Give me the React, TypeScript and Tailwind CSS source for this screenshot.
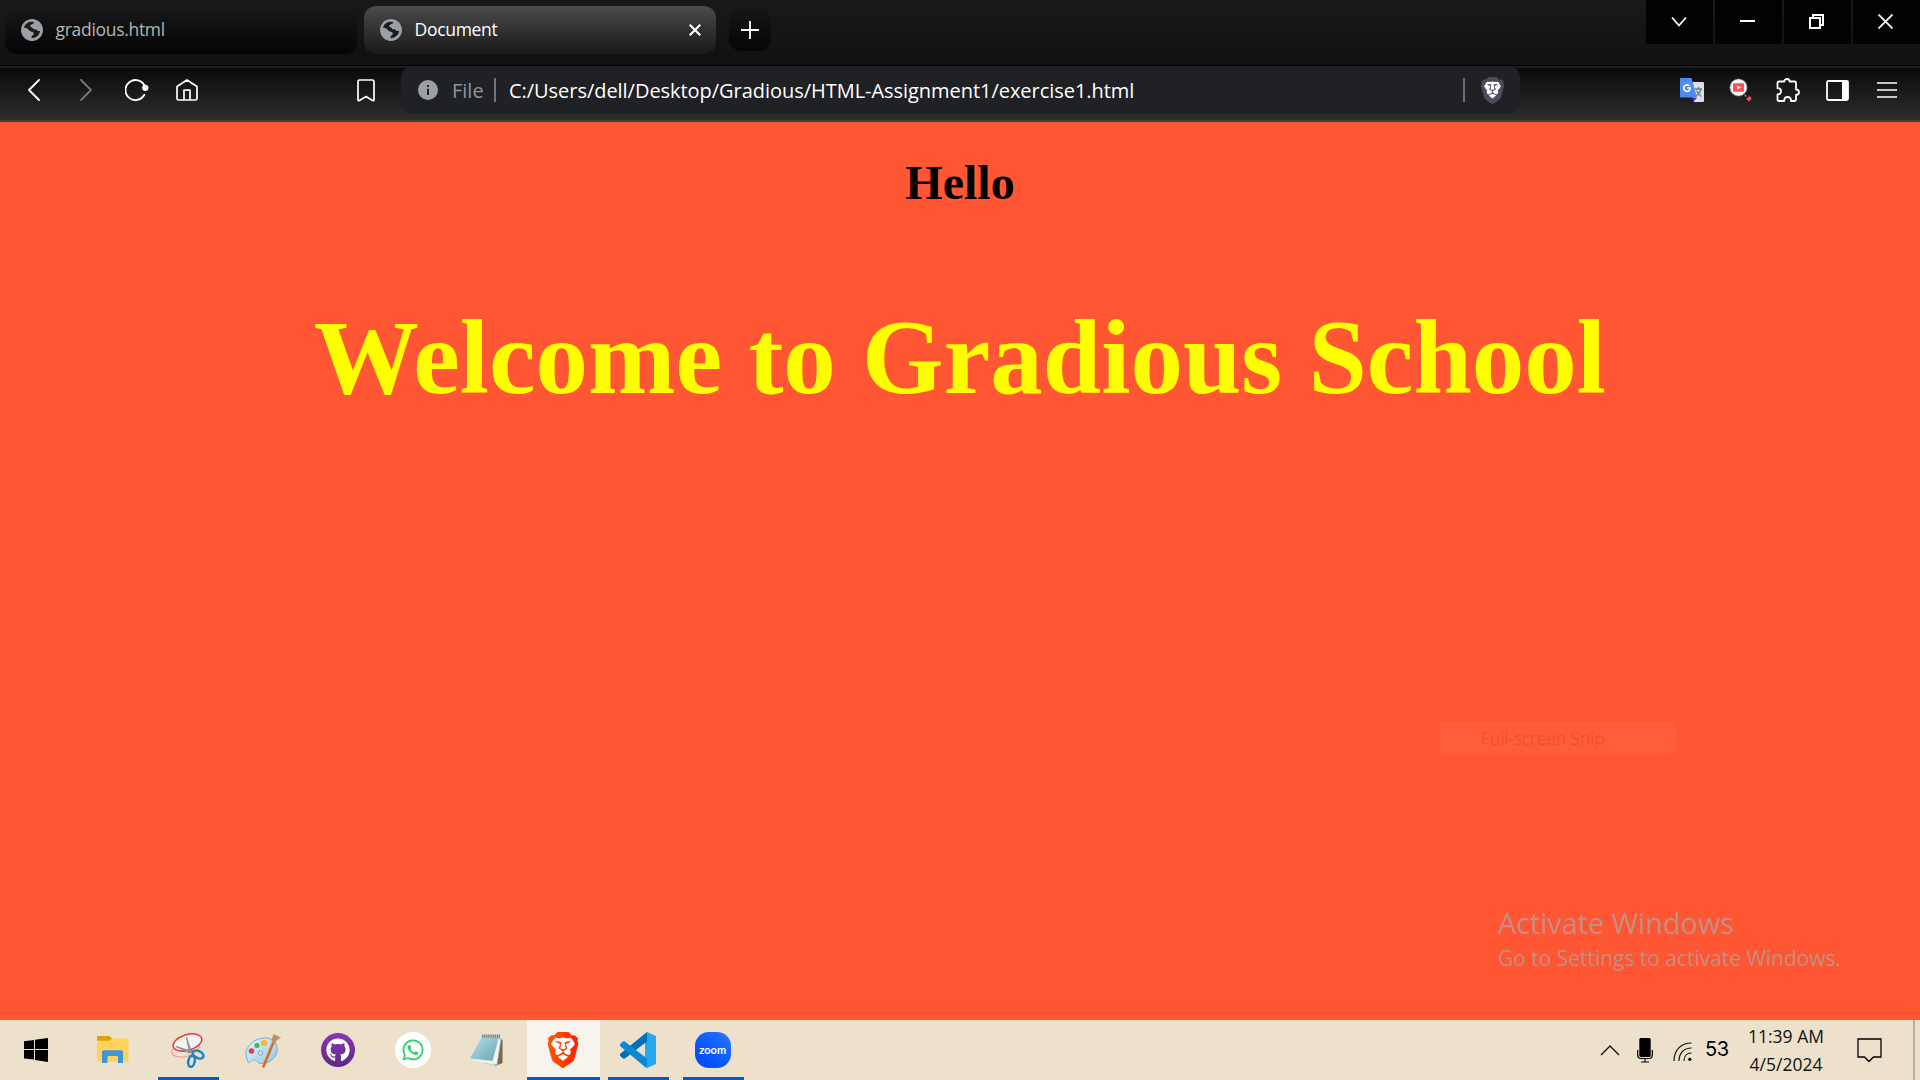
import { SiBrave } from "react-icons/si";
import { FaGithub, FaWhatsapp } from "react-icons/fa";
import type { ReactNode } from "react";

const ui = "font-['Open_Sans','Noto_Sans',sans-serif]";

function Globe() {
  return (
    <svg width="22" height="22" viewBox="0 0 22 22" className="shrink-0">
      <circle cx="11" cy="11" r="10.8" fill="#9aa0a6" />
      <path d="M3 8.4 C4 5 7 2.8 10.4 2.6 L13.5 3.2 C13 4.5 11.5 5 10.4 5.4 C9 6 8.8 8 10.5 8.3 C12 8.6 11.5 10.5 13.4 10.3 L15.5 10.5 C15.8 12 17.3 12.2 19.2 12 C18.6 15.5 15.6 18.6 11.8 19.2 L10.5 19 L10.8 16.8 C12.5 16 13.4 14.6 12.4 13.4 C11 12 8.8 13 8.1 11.3 C7.6 9.8 5.6 9 3 8.4 Z" fill="#1a1b1d" />
      <circle cx="11" cy="11" r="9.7" fill="none" stroke="#9aa0a6" strokeWidth="2" />
    </svg>
  );
}

function Lion({ size, fill }: { size: number; fill: string }) {
  return (
    <svg width={size} height={size} viewBox="0 0 24 24">
      <defs>
        <linearGradient id="brave" x1="0" y1="0" x2="1" y2="0">
          <stop offset="0" stopColor="#ff5601" />
          <stop offset="0.5" stopColor="#ff4000" />
          <stop offset="1" stopColor="#ff1f01" />
        </linearGradient>
      </defs>
      <path d="M7 4 L17 4 L19.5 8 L16.5 17 L12 20.5 L7.5 17 L4.5 8 Z" fill="#fff" />
      <SiBrave size={24} fill={fill} />
    </svg>
  );
}

function BackForward({ flip, color }: { flip?: boolean; color: string }) {
  return (
    <svg width="12" height="22" viewBox="0 0 12 22" fill="none" stroke={color} strokeWidth="1.8" strokeLinecap="round" strokeLinejoin="round">
      <path d={flip ? "M1 1 L11 11 L1 21" : "M11 1 L1 11 L11 21"} />
    </svg>
  );
}

function Tab({ title, active }: { title: string; active?: boolean }) {
  return (
    <div
      className={
        active
          ? "flex h-12 w-[352px] items-center rounded-xl bg-linear-to-b from-[#4b4b4b] to-[#1a1a1a] pr-[15px] pl-4 text-white"
          : "flex h-12 w-[352px] items-center rounded-xl bg-linear-to-b from-[#191919] to-[#050505] pr-4 pl-4 text-[#b4b4b4]"
      }
    >
      <Globe />
      <span className="-mt-0.5 ml-[12.5px] text-[17.5px] tracking-[-0.3px]">{title}</span>
      {active && (
        <svg className="ml-auto" width="12" height="12" viewBox="0 0 12 12" stroke="#fff" strokeWidth="2.1">
          <path d="M0.7 0.7 L11.3 11.3 M11.3 0.7 L0.7 11.3" />
        </svg>
      )}
    </div>
  );
}

function WindowButton({ children }: { children: ReactNode }) {
  return <div className="flex h-11 w-[67px] items-center justify-center bg-[#020202] pr-0.5 pb-px">{children}</div>;
}

function TabStrip() {
  return (
    <div className="flex h-[65px] bg-linear-to-b from-[#191919] to-[#101010]">
      <div className="flex gap-[7px] pt-1.5 pl-[5px]">
        <Tab title="gradious.html" />
        <Tab title="Document" active />
        <div className="mt-[3px] ml-[6px] flex h-[42px] w-[42px] items-center justify-center rounded-xl bg-linear-to-b from-[#151515] to-[#060606]">
          <svg width="18" height="18" viewBox="0 0 18 18" stroke="#fff" strokeWidth="1.8">
            <path d="M9 0 V18 M0 9 H18" />
          </svg>
        </div>
      </div>
      <div className="ml-auto flex gap-0.5">
        <WindowButton>
          <svg width="16" height="12" viewBox="0 0 16 12" fill="none" stroke="#fff" strokeWidth="1.8">
            <path d="M1 1.5 L8 9.5 L15 1.5" />
          </svg>
        </WindowButton>
        <WindowButton>
          <div className="mb-px h-0.5 w-[15px] bg-white" />
        </WindowButton>
        <WindowButton>
          <svg width="15" height="15" viewBox="0 0 15 15" fill="none" stroke="#fff" strokeWidth="2">
            <path d="M1 4 H11 V14 H1 Z M4 4 V1 H14 V11 H11" />
          </svg>
        </WindowButton>
        <WindowButton>
          <svg width="15" height="15" viewBox="0 0 15 15" stroke="#fff" strokeWidth="1.7">
            <path d="M0.5 0.5 L14.5 14.5 M14.5 0.5 L0.5 14.5" />
          </svg>
        </WindowButton>
      </div>
    </div>
  );
}

function Toolbar() {
  return (
    <div className="flex h-[57px] items-start border-b-2 border-[#3e3e3e] bg-[linear-gradient(to_bottom,#000_0px,#000_1px,#1c1c1c_1px,#1c1c1c_3px,#0a0a0a_3px,#2d2d2d_100%)]">
      <div className="flex h-[50px] w-[401px] items-center">
        <div className="ml-7">
          <BackForward color="#fff" />
        </div>
        <div className="ml-[40px]">
          <BackForward flip color="#777" />
        </div>
        <svg className="ml-[33px]" width="24" height="22" viewBox="0 0 24 22" fill="none" stroke="#fff" strokeWidth="1.9" strokeLinecap="round">
          <path d="M19.7 7.2 A10 10 0 1 0 19.3 15.8" />
          <circle cx="20.3" cy="8.8" r="2.2" fill="#fff" />
        </svg>
        <svg className="ml-[27px]" width="22" height="22" viewBox="0 0 22 22" fill="none" stroke="#fff" strokeWidth="1.7" strokeLinejoin="round">
          <path d="M1 7.5 L11 1 L21 7.5 V19.5 Q21 21 19.5 21 H2.5 Q1 21 1 19.5 Z M8 21 V11.2 H14 V21" />
        </svg>
        <svg className="ml-[159px]" width="18" height="23" viewBox="0 0 18 23" fill="none" stroke="#fff" strokeWidth="1.7" strokeLinejoin="round">
          <path d="M1 2.8 Q1 1 2.8 1 H15.2 Q17 1 17 2.8 V20.5 Q17 22.4 15.5 21.4 L9 17.5 L2.5 21.4 Q1 22.4 1 20.5 Z" />
        </svg>
      </div>
      <div className="mt-px flex h-12 w-[1119px] items-center rounded-xl bg-[#202124] text-[20px]">
        <svg className="ml-[17px]" width="20" height="20" viewBox="0 0 20 20">
          <circle cx="10" cy="10" r="10" fill="#9aa0a6" />
          <path d="M9 8.8 H11 V15 H9 Z M9 5 H11 V7 H9 Z" fill="#202124" />
        </svg>
        <span className="mt-px ml-[14px] w-[42px] text-[#8f959b]">File</span>
        <div className="h-6 w-0.5 bg-[#70757a]" />
        <span className="mt-px ml-[13px] whitespace-nowrap tracking-[-0.04px] text-white">C:/Users/dell/Desktop/Gradious/HTML-Assignment1/exercise1.html</span>
        <div className="mr-[14px] ml-auto h-6 w-0.5 bg-[#6b6d72]" />
        <div className="mr-[14px]">
          <Lion size={27} fill="#4d4c5d" />
        </div>
      </div>
      <div className="ml-auto flex h-[50px] items-center pr-[23px]">
        <svg width="24" height="24" viewBox="0 0 24 24">
          <path d="M10 4 H23 Q24 4 24 5 V23 Q24 24 23 24 H14 Z" fill="#dedede" />
          <path d="M15 11 H22 M18.5 9 V11 M21 11 C20 15 17.5 17 15.5 18 M16.5 12.5 C17.5 15 19.5 17.5 21.5 18.5" stroke="#5f7f88" strokeWidth="1.3" fill="none" />
          <path d="M12 19.5 H17 L13.5 24 Z" fill="#3740b8" />
          <path d="M1 0 H11.5 L17 19.5 H1 Q0 19.5 0 18.5 V1 Q0 0 1 0 Z" fill="#4b8bf5" />
          <path d="M9.4 8 A3.2 3.2 0 1 0 10.2 10 H7.4" stroke="#fff" strokeWidth="1.7" fill="none" />
        </svg>
        <svg className="ml-[25px]" width="24" height="24" viewBox="0 0 24 24">
          <circle cx="9.5" cy="9.5" r="8.8" fill="#f4f4f2" stroke="#23495a" strokeWidth="0.8" />
          <rect x="4" y="5.2" width="11" height="8.6" rx="0.7" fill="#fc5055" />
          <path d="M8 7.5 L12 9.5 L8 11.5 Z" fill="#fff" />
          <path d="M15.2 17.4 L16.4 16.4 L17.8 18 L16.6 19 Z M17.2 21 L20.4 18 L22.8 20.4 L19.8 23.5 Z" fill="#fa5055" />
        </svg>
        <svg className="ml-[23px]" width="24" height="24" viewBox="0 0 24 24" fill="none" stroke="#fff" strokeWidth="1.8" strokeLinejoin="round">
          <path d="M3 3.5 H8.3 C8.3 2 9.5 1 11 1 C12.6 1 13.7 2 13.7 3.5 H18.5 Q20 3.5 20 5 V11.5 C22 11.4 23 12.7 23 14.2 C23 15.8 22 16.8 20 16.8 V21.5 Q20 23 18.5 23 H15 C15 20 13.5 19 11.6 19 C9.7 19 8.2 20 8.2 23 H3 Q1.5 23 1.5 21.5 V16.4 C4 16.4 5 15 5 13.3 C5 11.5 4 10.2 1.5 10.2 V5 Q1.5 3.5 3 3.5 Z" />
        </svg>
        <svg className="ml-[26px]" width="23" height="21" viewBox="0 0 23 21">
          <rect x="1" y="1" width="21" height="19" rx="1.5" fill="none" stroke="#fff" strokeWidth="1.8" />
          <path d="M16 1 H22 V20 H16 Z" fill="#fff" />
        </svg>
        <svg className="ml-7" width="20" height="16" viewBox="0 0 20 16" stroke="#fff" strokeWidth="1.7">
          <path d="M0 1 H20 M0 8 H20 M0 15 H20" />
        </svg>
      </div>
    </div>
  );
}

function AppSlot({ children, state }: { children: ReactNode; state?: "open" | "active" }) {
  return (
    <div className={state === "active" ? "flex h-[60px] w-[73px] flex-col bg-[#f8f3ec]" : "mx-[6px] flex h-[60px] w-[61px] flex-col"}>
      <div className="flex h-[57px] items-center justify-center pt-[3px] pr-[1.5px]">{children}</div>
      {state && <div className="h-[3px] bg-[#005bd0]" />}
    </div>
  );
}

function Taskbar() {
  return (
    <div className="flex h-[60px] bg-[#ede1cc]">
      <div className="flex">
        <div className="flex w-[72px] items-center justify-center">
          <svg width="24" height="24" viewBox="0 0 24 24">
            <path d="M0 3.2 L10 1.9 V11 H0 Z M11 1.7 L24 0 V11 H11 Z M0 12 H10 V21.6 L0 20.6 Z M11 12 H24 V24 L11 22 Z" />
          </svg>
        </div>
        <div className="ml-[5px] flex gap-0.5">
          <AppSlot>
            <svg width="33" height="28" viewBox="0 0 33 28">
              <path d="M1 1 Q1 0 2 0 H13 L15.5 2.5 H31 Q32.5 2.5 32.5 4 V24.5 Q32.5 26 31 26 H2.5 Q1 26 1 24.5 Z" fill="#ffd35b" />
              <path d="M1 1 Q1 0 2 0 H13.5 L16 2.2 L14 4.7 H1 Z" fill="#e2a108" />
              <path d="M6 27 V16 Q6 14.3 7.7 14.3 H25.3 Q27 14.3 27 16 V27 H22 V21 Q22 20 21 20 H12.5 Q11.5 20 11.5 21 V27 Z" fill="#3996dd" />
            </svg>
          </AppSlot>
          <AppSlot state="open">
            <svg width="34" height="35" viewBox="0 0 34 35" fill="none">
              <ellipse cx="14.5" cy="16.5" rx="14" ry="7" transform="rotate(-14 14.5 16.5)" stroke="#e8a398" strokeWidth="1.2" fill="#f1dfd2" />
              <ellipse cx="16.5" cy="9.5" rx="14.8" ry="7.8" transform="rotate(-17 16.5 9.5)" stroke="#e33a3a" strokeWidth="1.5" fill="#f3f3f1" />
              <path d="M15.5 4.5 L18.5 20 L20.3 18.2 Z M5 13.5 L18 20 L21 18.3 Z" fill="#a8abac" stroke="#7d8183" strokeWidth="0.8" />
              <ellipse cx="27" cy="21.5" rx="5.8" ry="3.5" transform="rotate(25 27 21.5)" stroke="#1684c9" strokeWidth="2.5" />
              <ellipse cx="20.5" cy="28.3" rx="3.2" ry="5.6" transform="rotate(12 20.5 28.3)" stroke="#1684c9" strokeWidth="2.5" />
            </svg>
          </AppSlot>
          <AppSlot>
            <svg width="36" height="35" viewBox="0 0 36 35">
              <defs>
                <linearGradient id="pal" x1="0" y1="0" x2="1" y2="1">
                  <stop offset="0" stopColor="#e8f6fc" />
                  <stop offset="1" stopColor="#91c8e5" />
                </linearGradient>
              </defs>
              <path d="M1 22 C0 14 9 5 20 5 C29 5 33 11 32 18 C31 26 23 31 16 30.5 C11 30 12 26 8.5 27 C5 28 4.5 31.5 3 29 C2 27 1.3 24.5 1 22 Z" fill="url(#pal)" stroke="#74aecd" strokeWidth="1" />
              <circle cx="6.5" cy="18" r="2.8" fill="#e24538" />
              <rect x="9.5" y="10" width="5" height="5" rx="1.7" fill="#55b54a" />
              <rect x="16" y="7" width="6" height="6" rx="2" fill="#fbb72c" />
              <circle cx="15.5" cy="20" r="2.2" fill="#ecdfca" stroke="#74aecd" />
              <path d="M18.5 33.5 L28.5 9" stroke="#d6701f" strokeWidth="2.6" strokeLinecap="round" />
              <path d="M26.5 7 L28.5 1 L36 4.5 L31 8 L29.3 12 Z" fill="#bd9468" />
            </svg>
          </AppSlot>
          <AppSlot>
            <div className="flex h-[34px] w-[34px] items-center justify-center rounded-full bg-linear-to-b from-[#8a37b2] to-[#5b2a86] text-white">
              <FaGithub size={24} />
            </div>
          </AppSlot>
          <AppSlot>
            <div className="flex h-9 w-9 items-center justify-center rounded-full bg-white text-[#25d366]">
              <FaWhatsapp size={24} />
            </div>
          </AppSlot>
          <AppSlot>
            <svg className="-ml-1" width="34" height="33" viewBox="0 0 34 33">
              <defs>
                <linearGradient id="note" x1="0" y1="0" x2="1" y2="1">
                  <stop offset="0" stopColor="#b9dfe4" />
                  <stop offset="1" stopColor="#66a6b5" />
                </linearGradient>
              </defs>
              <path d="M30 4 L33.5 6 V29 L26 32 Z" fill="#7d6545" />
              <path d="M29 4 L32 5 L28 31 L15 29 Z" fill="#edf3f5" stroke="#9eafb3" strokeWidth="0.7" />
              <path d="M13 3 H30 L23.5 27 L1 24.5 Z" fill="url(#note)" />
              <path d="M1 24.5 L23.5 27 L27 30.5 L11 28.5 Z" fill="#e9f0f1" />
              <path d="M13 2 H31" stroke="#65777c" strokeWidth="3" strokeDasharray="1.3 0.8" />
            </svg>
          </AppSlot>
        </div>
        <div className="ml-0.5 flex gap-0.5">
          <AppSlot state="active">
            <Lion size={36} fill="url(#brave)" />
          </AppSlot>
          <AppSlot state="open">
            <svg width="36" height="36" viewBox="0 0 36 36">
              <path d="M27 0 L36 4 V32 L27 36 L25 31 V5 Z" fill="#24a7ee" />
              <path d="M27 0 V9.5 L4.5 26.8 L2.8 26.5 L0 23.8 V22 Z" fill="#0070b8" />
              <path d="M27 36 V26.5 L4.5 9.2 L2.8 9.5 L0 12.2 V14 L25 35 Z" fill="#0a8ad4" />
            </svg>
          </AppSlot>
          <AppSlot state="open">
            <div className="flex h-9 w-9 items-center justify-center rounded-[14px] bg-linear-to-bl from-[#2b75ff] via-[#0b5cff] to-[#0647e8] font-['Lato',sans-serif] text-[11px] leading-none font-bold text-white">
              <span className="-mt-0.5">zoom</span>
            </div>
          </AppSlot>
        </div>
      </div>
      <div className="ml-auto flex items-center">
        <svg width="20" height="11" viewBox="0 0 20 11" fill="none" stroke="#111" strokeWidth="1.4">
          <path d="M1 10 L10 1 L19 10" />
        </svg>
        <svg className="ml-[17px]" width="16" height="25" viewBox="0 0 16 25">
          <rect x="2.3" y="0" width="11.4" height="19" rx="1.5" />
          <path d="M0.7 12 V17 Q0.7 20.5 4 20.5 H12 Q15.3 20.5 15.3 17 V12 M8 20.5 V24 M4 24 H12" fill="none" stroke="#000" strokeWidth="1.2" />
        </svg>
        <svg className="mt-[3px] ml-5" width="20" height="20" viewBox="0 0 20 20" fill="none" stroke="#111" strokeWidth="1.2">
          <path d="M1 19 C1 8 8 1 18.5 1 M6 19 C6 11 11 6 18.5 6 M11 19 C11 14 14 11 18.5 11" />
          <circle cx="16.8" cy="17.3" r="1.6" fill="#000" stroke="none" />
        </svg>
        <span className="mt-[-3px] ml-3 w-[26px] font-['Inter',sans-serif] text-[20px] tracking-[-0.3px] text-black">53</span>
        <div className="ml-[13px] flex w-[84px] flex-col items-center text-[17.5px] leading-[28px] whitespace-nowrap text-[#111]">
          <span>11:39 AM</span>
          <span>4/5/2024</span>
        </div>
        <svg className="ml-[29px]" width="25" height="25" viewBox="0 0 25 25" fill="none" stroke="#000" strokeWidth="1.3">
          <path d="M1 1 H24 V19 H16.5 L12 23.5 L7.5 19 H1 Z" />
        </svg>
        <div className="ml-[31px] h-[60px] w-[7px] border-l-2 border-[#b9af9f]" />
      </div>
    </div>
  );
}

export default function App() {
  return (
    <div className={`${ui} flex h-[1080px] w-[1920px] flex-col overflow-hidden bg-black`}>
      <TabStrip />
      <Toolbar />
      <main className="relative flex-1 bg-[#ff5733] text-center font-['Liberation_Serif',serif] font-bold">
        <h1 className="pt-[33px] text-[48px] leading-[56px] text-black">Hello</h1>
        <h1 className="mt-[87px] text-[105px] leading-[120px] text-[#ffff00]">Welcome to Gradious School</h1>
        <div className="absolute top-[600px] left-[1440px] h-[31px] w-[236px] bg-[#ff5d3b] pl-[41px] text-left font-['Open_Sans',sans-serif] text-[17.5px] leading-[32px] font-normal tracking-[-0.3px] text-[#f4502e]">
          Full-screen Snip
        </div>
        <div className="absolute top-[783px] left-[1498px] text-left font-['Open_Sans',sans-serif] font-normal whitespace-nowrap text-[#c68d80]">
          <p className="text-[29px] leading-9 tracking-[-0.13px]">Activate Windows</p>
          <p className="text-[21px] leading-[34px] tracking-[-0.03px]">Go to Settings to activate Windows.</p>
        </div>
      </main>
      <Taskbar />
    </div>
  );
}
